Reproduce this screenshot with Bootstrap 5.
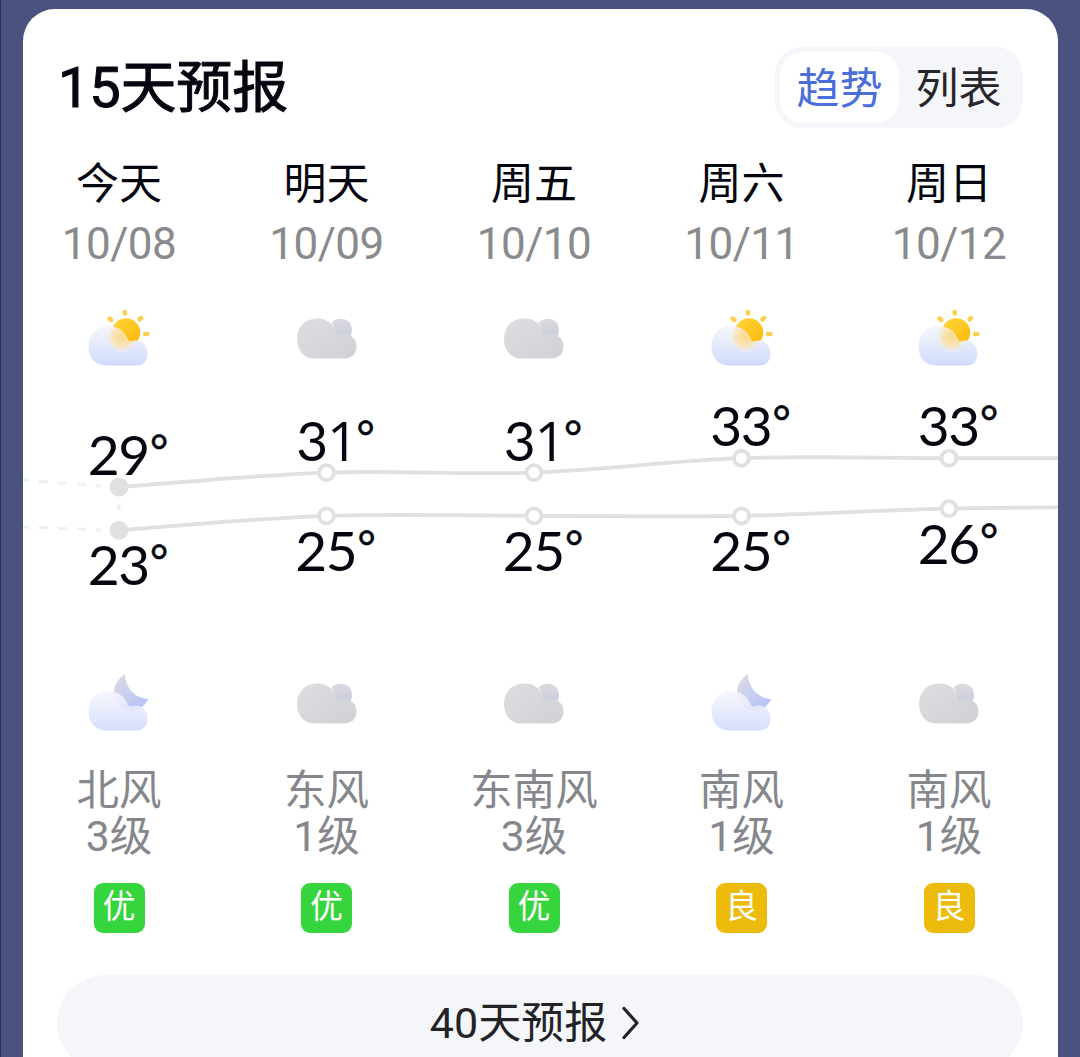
<!DOCTYPE html>
<html lang="zh-CN">

<head>
    <meta charset="UTF-8">
    <meta name="viewport" content="width=device-width, initial-scale=1.0">
    <title>15天预报</title>
    <link href="https://cdn.jsdelivr.net/npm/bootstrap@5.3.0/dist/css/bootstrap.min.css" rel="stylesheet">
    <style>
        body {
            height: 1057px;
            padding: 9px 22px 0 23px;
            background: #4a5280;
            box-shadow: inset 1px 0 #252e5e;
            font-family: Roboto, "Noto Sans CJK SC", sans-serif;
            color: #05060f;
        }

        .forecast {
            height: 1100px;
            padding-top: 38px;
            border-radius: 32px;
        }

        .forecast-head {
            height: 81px;
            padding: 0 35px 0 35px;
        }

        .forecast-title {
            font-size: 56px;
            font-weight: 400;
            line-height: 83px;
            letter-spacing: -.2px;
            -webkit-text-stroke: 1px #05060f;
        }

        .view-switch {
            width: 248px;
            padding: 5px;
            border-radius: 27px;
            background: #f5f6fa;
        }

        .view-switch .btn {
            width: 119px;
            padding: 3px 0 0;
            border: 0;
            border-radius: 23px;
            font-size: 43px;
            line-height: 68px;
            color: #25262b;
        }

        .view-switch .btn.active {
            background: #fff;
            color: #4b6edb;
        }

        .days {
            margin-top: 32px;
        }

        /* columns run slightly past the card on the left */
        .days-row {
            width: 1037.5px;
            margin-left: -7.75px;
        }

        .day-name {
            font-size: 43px;
            line-height: 48px;
        }

        .day-date {
            margin: 12px 0 32px;
            font-size: 44px;
            line-height: 49px;
            height: 48px;
            letter-spacing: -.5px;
            color: #888a8e;
        }

        .temps {
            height: 285px;
            padding-left: 18px;
            font-family: Lato, sans-serif;
            font-size: 55px;
            line-height: 60px;
            letter-spacing: -1.2px;
        }

        /* footless figure one */
        .fig-one {
            font-family: "Open Sans", sans-serif;
            line-height: 0;
            letter-spacing: -3px;
        }

        .degree {
            margin-left: 1px;
            letter-spacing: 0;
            font-size: 44px;
            line-height: 0;
            vertical-align: 8px;
            -webkit-text-stroke: .5px #05060f;
        }

        .chart {
            top: 220px;
            left: 0;
        }

        .wind {
            margin: 23px 0;
            font-size: 42.5px;
            line-height: 46px;
            color: #85878c;
        }

        .aqi {
            width: 51px;
            height: 50px;
            border-radius: 9px;
            font-size: 33px;
            line-height: 48px;
            color: #fff;
        }

        .aqi-good {
            background: #36d43d;
        }

        .aqi-fair {
            background: #edbb0c;
        }

        .more-btn {
            width: 966px;
            height: 96px;
            margin: 42px 0 0 34px;
            padding: 0 9px 0 0;
            border: 0;
            border-radius: 48px;
            background: #f5f6fa;
            font-size: 43px;
            color: #222327;
        }
    </style>
</head>

<body class="overflow-hidden">
    <!-- Shared icons -->
    <svg class="position-absolute" width="0" height="0">
        <defs>
            <linearGradient id="cloud-blue" x1="0" y1="0" x2="0" y2="1">
                <stop offset="0" stop-color="#f6f6fb" />
                <stop offset=".5" stop-color="#e4e9fc" />
                <stop offset="1" stop-color="#d0dafd" />
            </linearGradient>
            <linearGradient id="cloud-gray" x1="0" y1="0" x2="1" y2="1">
                <stop offset="0" stop-color="#dcdee0" />
                <stop offset="1" stop-color="#cfd1d6" />
            </linearGradient>
            <linearGradient id="lobe-gray" x1="0" y1="0" x2="0" y2="1">
                <stop offset="0" stop-color="#dadae0" />
                <stop offset="1" stop-color="#cccddc" />
            </linearGradient>
            <linearGradient id="sun-fill" x1="0" y1="0" x2="1" y2="1">
                <stop offset="0" stop-color="#ffd63c" />
                <stop offset="1" stop-color="#fdb606" />
            </linearGradient>
            <linearGradient id="moon-fill" x1="0" y1="0" x2=".8" y2="1">
                <stop offset="0" stop-color="#dddbe5" />
                <stop offset="1" stop-color="#b4c3f7" />
            </linearGradient>
            <radialGradient id="sun-haze">
                <stop offset="0" stop-color="#fbd98c" />
                <stop offset=".6" stop-color="#fae3b0" stop-opacity=".85" />
                <stop offset="1" stop-color="#f5ecdc" stop-opacity="0" />
            </radialGradient>
            <path id="cloud-shape" d="M27 65.500C16 65.500 9.500 57 9.500 46.500C9.500 34 18 26 29 26C38 26 45.500 31 48.500 39C49.500 41.500 51 42 54 41C62 39 68.500 45 68.500 53.500C68.500 61 64 65.500 58 65.500Z" />
            <clipPath id="cloud-clip">
                <use href="#cloud-shape" />
            </clipPath>

            <symbol id="icon-sun" viewBox="0 0 80 80">
                <g stroke="#fbd04c" stroke-width="4.400" stroke-linecap="round">
                    <path d="M45.700 12l.3 1.500M30.500 18.500l1.800 1.500M62 18l-1.500 1.600M66 34h2.500" />
                </g>
                <circle cx="47" cy="32.500" r="14.200" fill="url(#sun-fill)" />
                <use href="#cloud-shape" fill="url(#cloud-blue)" />
                <circle cx="43" cy="37" r="16" fill="url(#sun-haze)" clip-path="url(#cloud-clip)" />
            </symbol>
            <symbol id="icon-moon" viewBox="0 0 80 80">
                <path d="M46 9C46 22 55 33 69.500 34C64 44 56 47 47 45C38 40 34 32 35.500 23C37 17 41 12 46 9Z" fill="url(#moon-fill)" />
                <use href="#cloud-shape" fill="url(#cloud-blue)" fill-opacity=".88" />
            </symbol>
            <symbol id="icon-cloud" viewBox="0 0 80 80">
                <path d="M27 58.500C17 58.500 10 50 10 39C10 27 18 18.500 30 18.500C37 18.500 43 21 46 26L58 34.500C65 35 69.500 39 69.500 46.500C69.500 53.500 65 58.500 57 58.500Z" fill="url(#cloud-gray)" />
                <path d="M44.500 23C48.500 18 57 17.500 61.500 21.500C65.500 25 66 31.500 63.500 36C58.500 33.500 53.500 34 49.500 35.500C49 30 48 27 44.500 23Z" fill="url(#lobe-gray)" />
            </symbol>
        </defs>
    </svg>

    <main class="forecast bg-white overflow-hidden">
        <div class="forecast-head d-flex justify-content-between">
            <h1 class="forecast-title mb-0">15天预报</h1>
            <div class="view-switch d-flex">
                <button type="button" class="btn active">趋势</button>
                <button type="button" class="btn">列表</button>
            </div>
        </div>

        <div class="days position-relative">
            <svg class="chart position-absolute" id="chart" width="1035" height="285" fill="none"></svg>
            <div class="days-row d-flex position-relative" id="days"></div>
        </div>

        <button type="button" class="more-btn d-flex align-items-center justify-content-center">
            <span>40天预报</span>
            <svg width="34" height="40" viewBox="0 0 34 40" fill="none" stroke="#222327" stroke-width="3.200" stroke-linecap="round" stroke-linejoin="round">
                <path d="M17 5.500l13 14.500l-13 14.500" />
            </svg>
        </button>
    </main>

    <script src="https://cdn.jsdelivr.net/npm/bootstrap@5.3.0/dist/js/bootstrap.bundle.min.js"></script>
    <script>
        const days = [
            { name: '今天', date: '10/08', day: 'sun', night: 'moon', high: 29, low: 23, wind: '北风', level: 3, aqi: '优' },
            { name: '明天', date: '10/09', day: 'cloud', night: 'cloud', high: 31, low: 25, wind: '东风', level: 1, aqi: '优' },
            { name: '周五', date: '10/10', day: 'cloud', night: 'cloud', high: 31, low: 25, wind: '东南风', level: 3, aqi: '优' },
            { name: '周六', date: '10/11', day: 'sun', night: 'moon', high: 33, low: 25, wind: '南风', level: 1, aqi: '良' },
            { name: '周日', date: '10/12', day: 'sun', night: 'cloud', high: 33, low: 26, wind: '南风', level: 1, aqi: '良' }
        ];

        // Temperature to y inside the chart
        const tempY = t => 107 - (t - 29) * 7.2;
        const colX = i => 96 + i * 207.5;

        const icon = name => `<svg class="d-block mx-auto" width="80" height="80"><use href="#icon-${name}"/></svg>`;
        const temp = t => String(t).replace('1', '<span class="fig-one">1</span>') + '<span class="degree">°</span>';

        document.getElementById('days').innerHTML = days.map(d => {
            const hy = tempY(d.high);
            const ly = tempY(d.low);
            return `
                <div class="flex-fill text-center" style="width: 207.5px">
                    <div class="day-name">${d.name}</div>
                    <div class="day-date">${d.date}</div>
                    ${icon(d.day)}
                    <div class="temps d-flex flex-column">
                        <div style="margin-top: ${hy - 63}px">${temp(d.high)}</div>
                        <div style="margin-top: ${ly - hy + 7}px">${temp(d.low)}</div>
                    </div>
                    ${icon(d.night)}
                    <div class="wind">${d.wind}<br>${d.level}级</div>
                    <div class="aqi mx-auto ${d.aqi === '优' ? 'aqi-good' : 'aqi-fair'}">${d.aqi}</div>
                </div>`;
        }).join('');

        // Smooth line through the points, running off the right edge
        function curve(key, endY) {
            const pts = days.map((d, i) => [colX(i), tempY(d[key])]);
            pts.push([colX(5), endY]);
            let path = `M${pts[0]}`;
            for (let i = 1; i < pts.length; i++) {
                const p0 = pts[Math.max(i - 2, 0)], p1 = pts[i - 1], p2 = pts[i], p3 = pts[Math.min(i + 1, pts.length - 1)];
                path += `C${p1[0] + (p2[0] - p0[0]) / 6} ${p1[1] + (p2[1] - p0[1]) / 6} ${p2[0] - (p3[0] - p1[0]) / 6} ${p2[1] - (p3[1] - p1[1]) / 6} ${p2}`;
            }
            return `<path d="${path}" stroke="#dfe0e0" stroke-width="3.800"/>`;
        }

        const dots = key => days.map((d, i) =>
            `<circle cx="${colX(i)}" cy="${tempY(d[key])}" r="${i ? 7.5 : 9.5}" fill="${i ? '#fff' : '#dfe0e2'}" ${i ? 'stroke="#dfe0e0" stroke-width="3.800"' : ''}/>`).join('');

        document.getElementById('chart').innerHTML = `
            <path d="M0 100L78 106M0 147L78 150M96 124v9" stroke="#eff0f0" stroke-width="3" stroke-dasharray="9 10" stroke-dashoffset="3"/>
            ${curve('high', 78)}${curve('low', 127)}${dots('high')}${dots('low')}`;
    </script>
</body>

</html>
